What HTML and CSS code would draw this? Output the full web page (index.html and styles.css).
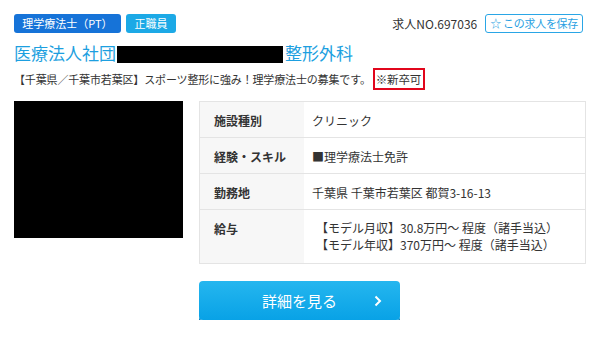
FILE: index.html
```html
<!DOCTYPE html>
<html>
<head>
    <title>求人情報</title>
    <link rel="stylesheet" href="styles.css">
</head>
<body>
    <div class="job">
        <div class="job-head">
            <div class="tags">
                <span class="tag tag-job">理学療法士（PT）</span>
                <span class="tag tag-type">正職員</span>
            </div>
            <div class="head-right">
                <span class="job-no">求人NO.697036</span>
                <span class="save-button">☆ この求人を保存</span>
            </div>
        </div>
        <h2 class="job-title">医療法人社団<span class="redact"></span>整形外科</h2>
        <p class="job-lead">【千葉県／千葉市若葉区】スポーツ整形に強み！理学療法士の募集です。<span class="mark">※新卒可</span></p>

        <div class="job-body">
            <div class="job-image"></div>
            <table class="job-table">
                <tr class="row-short">
                    <th>施設種別</th>
                    <td>クリニック</td>
                </tr>
                <tr class="row-short">
                    <th>経験・スキル</th>
                    <td>■理学療法士免許</td>
                </tr>
                <tr class="row-short">
                    <th>勤務地</th>
                    <td>千葉県 千葉市若葉区 都賀3-16-13</td>
                </tr>
                <tr class="row-tall">
                    <th>給与</th>
                    <td>【モデル月収】30.8万円～ 程度（諸手当込）<br>【モデル年収】370万円～ 程度（諸手当込）</td>
                </tr>
            </table>
        </div>

        <div class="button-row">
            <a class="detail-button" href="#">詳細を見る
                <svg class="chevron" width="8" height="12" viewBox="0 0 8 12"><path d="M1.5 1.5 L6 6 L1.5 10.5" fill="none" stroke="#fff" stroke-width="2"/></svg>
            </a>
        </div>
    </div>
</body>
</html>
```

FILE: styles.css
```css
/* job card */
body {
    margin: 0;
    font-family: "Noto Sans CJK JP", "Noto Sans", sans-serif;
    color: #333;
    background: #fff;
}
.job {
    padding: 14px 14px 0 14px;
}
.job-head {
    display: flex;
    justify-content: space-between;
    align-items: center;
    height: 19px;
}
.tags {
    display: flex;
    gap: 5px;
}
.tag {
    display: inline-block;
    height: 19px;
    line-height: 19px;
    padding: 0 8px;
    font-size: 11px;
    color: #fff;
    border-radius: 3px;
}
.tag-job {
    background-color: #1673d8;
    width: 91px;
    text-align: center;
}
.tag-type {
    background-color: #1ca9e6;
    width: 34px;
    text-align: center;
}
.head-right {
    display: flex;
    align-items: center;
    gap: 8px;
    margin-right: 3px;
}
.job-no {
    font-size: 12px;
    color: #333;
}
.save-button {
    display: inline-block;
    white-space: nowrap;
    height: 17px;
    line-height: 17px;
    padding: 0 4px;
    font-size: 11px;
    letter-spacing: -0.3px;
    color: #2a9fe2;
    border: 1px solid #2aa6e6;
    border-radius: 3px;
}
.job-title {
    margin: 8px 0 0 0;
    font-size: 17px;
    font-weight: normal;
    color: #1d9fe0;
    line-height: 24px;
    display: flex;
    align-items: center;
}
.redact {
    display: inline-block;
    width: 166px;
    height: 17px;
    background: #000;
    margin: 3px 2px 0 1px;
}
.job-lead {
    margin: 2px 0 0 0;
    font-size: 11px;
    line-height: 24px;
    letter-spacing: -0.15px;
}
.mark {
    display: inline-block;
    border: 2px solid #e1061c;
    line-height: 18px;
    padding: 0 2px 0 1px;
    margin-left: 2px;
    font-size: 11.5px;
}
.job-body {
    display: flex;
    gap: 16px;
    margin-top: 10px;
}
.job-image {
    width: 169px;
    height: 137px;
    background: #000;
}
.job-table {
    width: 387px;
    border-collapse: collapse;
    border: 1px solid #e4e4e4;
    font-size: 12px;
}
.job-table th {
    width: 90px;
    text-align: left;
    vertical-align: top;
    font-weight: bold;
    background-color: #f7f7f7;
    padding: 10px 0 0 14px;
    border-bottom: 1px solid #e4e4e4;
}
.job-table td {
    vertical-align: top;
    padding: 10px 0 0 8px;
    border-bottom: 1px solid #e4e4e4;
    line-height: 17px;
}
.row-short th, .row-short td {
    height: 25px;
    line-height: 17px;
}
.row-tall th, .row-tall td {
    height: 43px;
    line-height: 17px;
}
.row-tall td {
    padding-top: 9px;
    padding-left: 12px;
}
.button-row {
    display: flex;
    justify-content: center;
    margin-top: 17px;
}
.detail-button {
    position: relative;
    display: block;
    width: 201px;
    height: 39px;
    line-height: 39px;
    text-align: center;
    color: #fff;
    text-decoration: none;
    font-size: 15px;
    border-radius: 4px;
    background: linear-gradient(#25b6ef, #08a2e6);
    box-shadow: 0 4px 0 #0b87c3;
    margin-left: -1px;
}
.chevron {
    position: absolute;
    right: 18px;
    top: 14px;
}
```
